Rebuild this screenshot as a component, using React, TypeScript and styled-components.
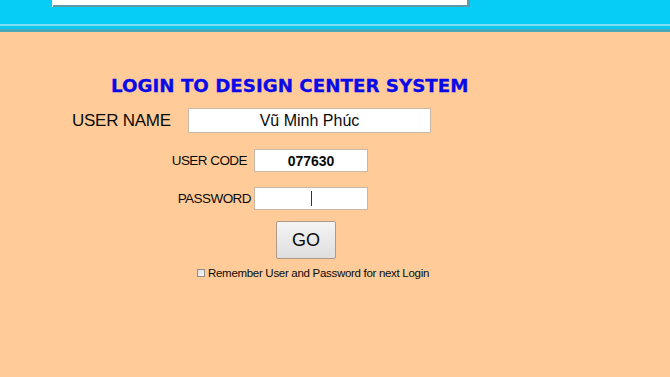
import React from 'react'
import styled, { createGlobalStyle } from 'styled-components'

const GlobalStyle = createGlobalStyle`
    html, body {
        margin: 0;
        padding: 0;
        background: #ffcc99;
        font-family: "Liberation Sans", Arial, sans-serif;
    }
`

const Page = styled.div`
    width: 670px;
    height: 377px;
    overflow: hidden;
    background: #ffcc99;
`

const Header = styled.div`
    height: 24px;
    background: #06cdf6;
    padding-left: 53px;
`

const WindowStrip = styled.div`
    width: 414px;
    height: 5px;
    background: #ffffff;
    border-right: 3px solid #5d9aa8;
    border-bottom: 2px solid #5d9aa8;
    box-shadow: -1px 0 0 #e8f8ff;
`

const HeaderEdge = styled.div`
    height: 8px;
    background: linear-gradient(
        to bottom,
        #7fdcf0 0px,
        #7fdcf0 2px,
        #0bc8ef 2px,
        #0bc8ef 5px,
        #4aa8bb 5px,
        #4aa8bb 8px
    );
`

const Form = styled.div`
    display: flex;
    flex-direction: column;
    padding-top: 44px;
`

const Title = styled.h1`
    margin: 0 0 0 111px;
    font-family: "DejaVu Sans", Verdana, sans-serif;
    font-weight: bold;
    font-size: 18.25px;
    line-height: 20px;
    color: #0a0ae8;
    white-space: nowrap;
    -webkit-text-stroke: 0.3px #0a0ae8;
`

const Row = styled.div<{ top: number }>`
    display: flex;
    align-items: center;
    margin-top: ${(p) => p.top}px;
`

const BigLabel = styled.span`
    margin-left: 72px;
    width: 116px;
    font-size: 17px;
    letter-spacing: -0.25px;
    color: #0a0a0a;
`

const Label = styled.span<{ pad: number }>`
    width: 254px;
    box-sizing: border-box;
    padding-right: ${(p) => p.pad}px;
    text-align: right;
    font-size: 13.5px;
    letter-spacing: -0.55px;
    color: #0a0a0a;
`

const TextBox = styled.div<{ w: number; h: number; bold?: boolean; size: number }>`
    width: ${(p) => p.w}px;
    height: ${(p) => p.h}px;
    box-sizing: border-box;
    background: #ffffff;
    border: 1px solid #c9b8a6;
    display: flex;
    align-items: center;
    justify-content: center;
    font-size: ${(p) => p.size}px;
    font-weight: ${(p) => (p.bold ? 'bold' : 'normal')};
    color: #0a0a0a;
`

const Caret = styled.span`
    width: 1px;
    height: 15px;
    background: #333;
`

const GoButton = styled.button`
    margin-left: 276px;
    width: 60px;
    height: 38px;
    border: 1px solid #b09a86;
    border-radius: 2px;
    background: linear-gradient(to bottom, #f4f4f4, #dedede);
    font-family: "Liberation Sans", Arial, sans-serif;
    font-size: 18px;
    color: #0a0a0a;
    padding: 0;
`

const RememberRow = styled.label`
    display: flex;
    align-items: center;
    margin-left: 197px;
    margin-top: 8px;
    font-size: 11.5px;
    letter-spacing: -0.3px;
    color: #0a0a0a;
`

const Box = styled.span`
    width: 8px;
    height: 8px;
    box-sizing: border-box;
    border: 1px solid #8e8e8e;
    background: linear-gradient(to bottom right, #dcdcdc, #f8f8f8);
    margin-right: 3px;
`

export default function App() {
    return (
        <Page>
            <GlobalStyle />
            <Header>
                <WindowStrip />
            </Header>
            <HeaderEdge />
            <Form>
                <Title>LOGIN TO DESIGN CENTER SYSTEM</Title>
                <Row top={12}>
                    <BigLabel>USER NAME</BigLabel>
                    <TextBox w={243} h={25} size={16}>
                        Vũ Minh Phúc
                    </TextBox>
                </Row>
                <Row top={16}>
                    <Label pad={7}>USER CODE</Label>
                    <TextBox w={114} h={23} size={14} bold>
                        077630
                    </TextBox>
                </Row>
                <Row top={15}>
                    <Label pad={3}>PASSWORD</Label>
                    <TextBox w={114} h={23} size={13}>
                        <Caret />
                    </TextBox>
                </Row>
                <Row top={11}>
                    <GoButton>GO</GoButton>
                </Row>
                <RememberRow>
                    <Box />
                    Remember User and Password for next Login
                </RememberRow>
            </Form>
        </Page>
    )
}
